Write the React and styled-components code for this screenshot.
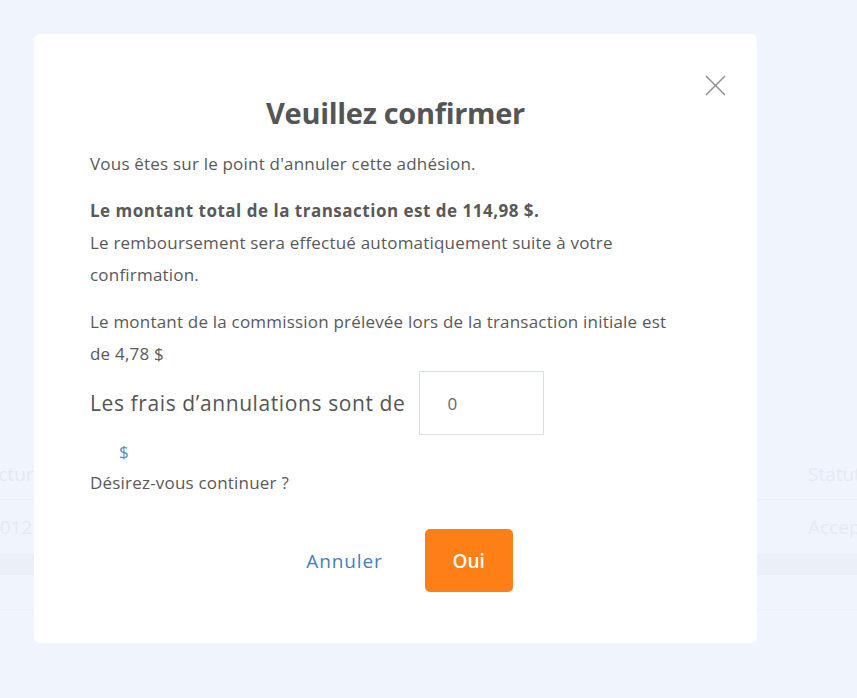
import React from 'react'
import styled, { createGlobalStyle } from 'styled-components'

const GlobalStyle = createGlobalStyle`
  html, body {
    margin: 0;
    padding: 0;
    background: #f0f5fd;
    font-family: 'Open Sans', 'Noto Sans', sans-serif;
  }
  * { box-sizing: border-box; }
`

const Page = styled.div`
  position: relative;
  width: 857px;
  height: 698px;
  overflow: hidden;
  background: #f0f5fd;
`

const Table = styled.div`
  padding-top: 448px;
  color: #e5eaf2;
  font-size: 19px;
`

const TableRow = styled.div`
  display: grid;
  grid-template-columns: 1fr 49px;
  align-items: center;
  height: ${(p) => p.$h || 52}px;
  margin-left: -22px;
  border-bottom: 1px solid #e9eef7;
  background: ${(p) => p.$bg || 'transparent'};
  white-space: nowrap;
  overflow: hidden;
`

const Overlay = styled.div`
  position: absolute;
  inset: 0;
  display: flex;
  align-items: flex-start;
  padding: 34px 0 0 34px;
`

const Modal = styled.div`
  position: relative;
  width: 723px;
  height: 609px;
  background: #fff;
  border-radius: 6px;
  padding: 59px 56px 0 56px;
  color: #595959;
`

const Close = styled.button`
  position: absolute;
  top: 40px;
  right: 30px;
  width: 24px;
  height: 24px;
  padding: 0;
  border: 0;
  background: none;
  cursor: pointer;
`

const Title = styled.h2`
  margin: 0 0 15px;
  text-align: center;
  font-size: 29px;
  font-weight: 700;
  line-height: 40px;
  color: #555;
  letter-spacing: -0.3px;
`

const Text = styled.p`
  max-width: 590px;
  margin: 0 0 ${(p) => (p.$mb ?? 15)}px;
  font-size: 17px;
  line-height: 32px;
  letter-spacing: 0.2px;
`

const Strong = styled.strong`
  display: block;
  font-weight: 700;
  letter-spacing: 0.5px;
`

const FeeRow = styled.div`
  display: flex;
  align-items: center;
  gap: 14px;
`

const FeeLabel = styled.span`
  font-size: 21px;
  letter-spacing: 0.6px;
  color: #555;
`

const FeeInput = styled.input`
  width: 125px;
  height: 64px;
  border: 1px solid #d9dee7;
  border-radius: 0;
  padding: 0 27px;
  font-family: inherit;
  font-size: 17px;
  color: #666;
  outline: none;
`

const Currency = styled.div`
  margin: 4px 0 0 29px;
  font-size: 17px;
  line-height: 26px;
  color: #4a8ccc;
`

const Question = styled(Text)`
  margin: 0;
  line-height: 36px;
`

const Actions = styled.div`
  display: flex;
  justify-content: center;
  align-items: center;
  gap: 36px;
  margin-top: 28px;
  padding-left: 22px;
`

const LinkButton = styled.button`
  border: 0;
  background: none;
  font-family: inherit;
  font-size: 19px;
  letter-spacing: 0.9px;
  color: #3f80c0;
  cursor: pointer;
`

const PrimaryButton = styled.button`
  width: 88px;
  height: 63px;
  border: 0;
  border-radius: 5px;
  background: #ff7f17;
  color: #fff;
  font-family: inherit;
  font-size: 19px;
  font-weight: 600;
  cursor: pointer;
`

export default function App() {
  return (
    <Page>
      <GlobalStyle />
      <Table>
        <TableRow $h={52}>
          <span>Facture</span>
          <span>Statut</span>
        </TableRow>
        <TableRow $h={55}>
          <span>00012</span>
          <span>Accepté</span>
        </TableRow>
        <TableRow $h={20} $bg="#eaeff8" />
        <TableRow $h={35} />
      </Table>
      <Overlay>
        <Modal>
          <Close aria-label="Fermer">
            <svg width="24" height="24" viewBox="0 0 24 24">
              <path d="M3 2 L22 21 M22 2 L3 21" stroke="#8a8a8a" strokeWidth="1.4" fill="none" />
            </svg>
          </Close>
          <Title>Veuillez confirmer</Title>
          <Text>Vous êtes sur le point d'annuler cette adhésion.</Text>
          <Text>
            <Strong>Le montant total de la transaction est de 114,98 $.</Strong>
            Le remboursement sera effectué automatiquement suite à votre confirmation.
          </Text>
          <Text $mb={1}>
            Le montant de la commission prélevée lors de la transaction initiale est de 4,78 $
          </Text>
          <FeeRow>
            <FeeLabel>Les frais d’annulations sont de</FeeLabel>
            <FeeInput defaultValue="0" />
          </FeeRow>
          <Currency>$</Currency>
          <Question>Désirez-vous continuer ?</Question>
          <Actions>
            <LinkButton>Annuler</LinkButton>
            <PrimaryButton>Oui</PrimaryButton>
          </Actions>
        </Modal>
      </Overlay>
    </Page>
  )
}
